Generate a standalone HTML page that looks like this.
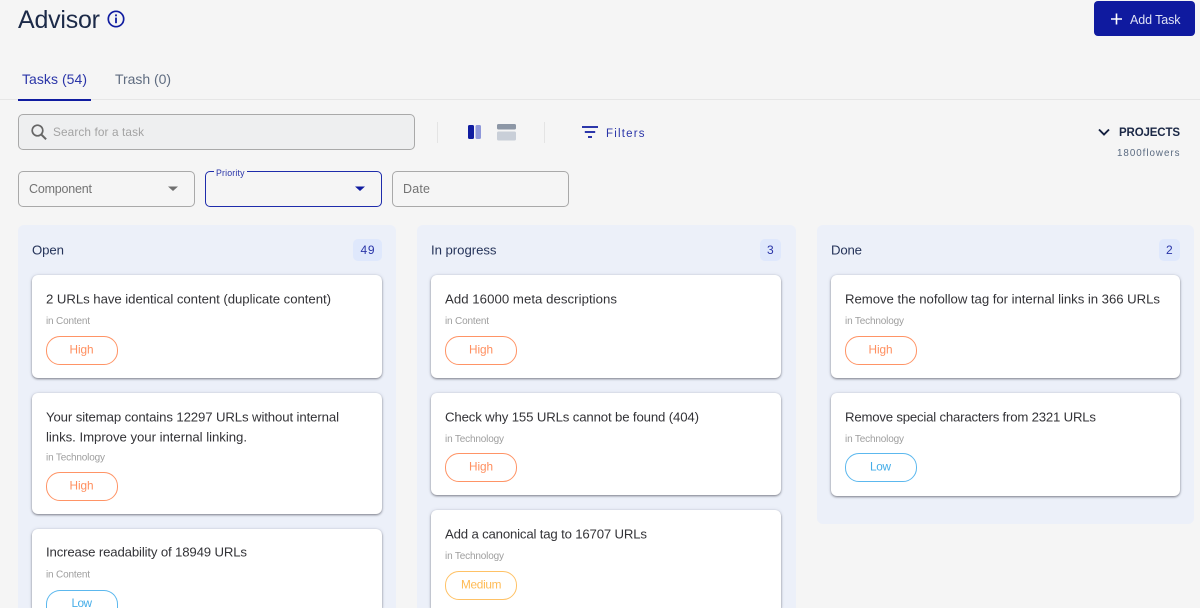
<!DOCTYPE html>
<html><head><meta charset="utf-8">
<style>
html,body{margin:0;padding:0;background:#f5f5f5}
#p{position:relative;width:1200px;height:608px;overflow:hidden;background:#f5f5f5;font-family:"Liberation Sans",sans-serif}
.a{position:absolute;box-sizing:border-box}
.col{background:#ecf0f9;border-radius:6px 6px 0 0}
.card{background:#fff;border-radius:6px;box-shadow:0 1px 2px rgba(40,40,50,.55),0 0 4px rgba(60,70,110,.1)}
.pill{border-radius:14px;border:1.3px solid;width:71.5px;height:28.5px}
.h{border-color:#ff9466}.m{border-color:#ffc266}.l{border-color:#5cb8ee}
.box{border:1.4px solid #a9a9a9;border-radius:5px}
.badge{background:#dfe8fc;border-radius:5px;height:22px}
svg{position:absolute;left:0;top:0}
text{font-family:"Liberation Sans",sans-serif}
.t{font-size:13.2px;fill:#333337}
.s{font-size:10px;fill:#9e9e9e}
.ch{font-size:11.8px;fill:#ff8f5f}.cm{font-size:11.8px;fill:#ffbb55}.cl{font-size:11.8px;fill:#45ade8}
.c{font-size:13.2px;fill:#26345a}
.b{font-size:12px;fill:#2a35a8}
</style></head><body>
<div id="p">
<div class="a" style="left:1094px;top:1px;width:101px;height:35px;background:#0f1a9f;border-radius:4px"></div>
<div class="a" style="left:0;top:99px;width:1200px;height:1.4px;background:#e6e6e6"></div>
<div class="a" style="left:18px;top:98.5px;width:73px;height:2px;background:#101ca0"></div>
<div class="a box" style="left:18px;top:114px;width:397px;height:36px;background:#eeeff0"></div>
<div class="a" style="left:437px;top:122px;width:1px;height:21px;background:#e4e4e4"></div>
<div class="a" style="left:544px;top:122px;width:1px;height:21px;background:#e4e4e4"></div>
<div class="a box" style="left:18px;top:171px;width:176.5px;height:36px"></div>
<div class="a box" style="left:205px;top:171px;width:176.5px;height:36px;border-color:#1e2cab"></div>
<div class="a" style="left:214px;top:168px;width:33px;height:6px;background:#f5f5f5"></div>
<div class="a box" style="left:392px;top:171px;width:176.5px;height:36px"></div>

<div class="a col" style="left:18px;top:225px;width:378px;height:383px"></div>
<div class="a col" style="left:417px;top:225px;width:378.5px;height:383px"></div>
<div class="a col" style="left:817px;top:225px;width:377px;height:299px;border-radius:6px"></div>

<div class="a badge" style="left:353px;top:239px;width:29px"></div>
<div class="a badge" style="left:760px;top:239px;width:21px"></div>
<div class="a badge" style="left:1159px;top:239px;width:21px"></div>

<div class="a card" style="left:32px;top:275px;width:350px;height:103px"></div>
<div class="a card" style="left:32px;top:393px;width:350px;height:121px"></div>
<div class="a card" style="left:32px;top:529px;width:350px;height:79px;border-radius:6px 6px 0 0"></div>
<div class="a card" style="left:431px;top:275px;width:350px;height:103px"></div>
<div class="a card" style="left:431px;top:393px;width:350px;height:102px"></div>
<div class="a card" style="left:431px;top:510px;width:350px;height:98px;border-radius:6px 6px 0 0"></div>
<div class="a card" style="left:831px;top:275px;width:349px;height:103px"></div>
<div class="a card" style="left:831px;top:393px;width:349px;height:103px"></div>

<div class="a pill h" style="left:46px;top:336px"></div>
<div class="a pill h" style="left:46px;top:472px"></div>
<div class="a pill l" style="left:46px;top:590px;height:18px;border-bottom:0;border-radius:14px 14px 0 0"></div>
<div class="a pill h" style="left:445px;top:336px"></div>
<div class="a pill h" style="left:445px;top:453px"></div>
<div class="a pill m" style="left:445px;top:571px"></div>
<div class="a pill h" style="left:845px;top:336px"></div>
<div class="a pill l" style="left:845px;top:453px"></div>

<svg width="1200" height="608" viewBox="0 0 1200 608">
<text x="18" y="28" font-size="25" fill="#1c2a48" textLength="82">Advisor</text>
<circle cx="116" cy="19" r="7.7" fill="none" stroke="#101ca0" stroke-width="1.7"/>
<rect x="115.1" y="17.6" width="1.8" height="5.6" fill="#101ca0"/><rect x="115.1" y="14.4" width="1.8" height="1.9" fill="#101ca0"/>
<path d="M1116.5 13.5v11M1111 19h11" stroke="#fff" stroke-width="1.6" fill="none"/>
<text x="1130" y="24" font-size="12.5" fill="#dfe2f5" textLength="50.5">Add Task</text>

<text x="22" y="84" font-size="14" fill="#2a35a8" textLength="65">Tasks (54)</text>
<text x="115" y="84" font-size="14" fill="#5f6c80" textLength="56">Trash (0)</text>

<circle cx="37.5" cy="130.5" r="5.3" fill="none" stroke="#666" stroke-width="1.7"/>
<path d="M41.3 134.5l4.8 4.8" stroke="#666" stroke-width="2" fill="none"/>
<text x="53" y="136" font-size="11.8" fill="#a3a3a3" textLength="91">Search for a task</text>

<rect x="468" y="125" width="6" height="14" rx="1.5" fill="#101ca0"/>
<rect x="475.5" y="125" width="5.5" height="14" rx="1.5" fill="#8f98da"/>
<rect x="497" y="124" width="19" height="5.5" rx="1.5" fill="#8d97a6"/>
<rect x="497" y="131.5" width="19" height="9" rx="1.5" fill="#c9cfd8"/>

<path d="M582 127h16M584.8 132h10.4M588 137h4" stroke="#101ca0" stroke-width="1.7" fill="none"/>
<text x="606" y="137" font-size="11.5" fill="#2a35a8" textLength="38.5">Filters</text>

<path d="M1099 129.5l5 5 5-5" stroke="#14203f" stroke-width="1.9" fill="none"/>
<text x="1119" y="136" font-size="11.5" font-weight="bold" fill="#1a2745" textLength="61">PROJECTS</text>
<text x="1117" y="156" font-size="9.8" fill="#5a6a80" textLength="62.5">1800flowers</text>

<text x="29" y="193" font-size="12.5" fill="#737373" textLength="63">Component</text>
<path d="M168 186.5h10l-5 4.5z" fill="#707070"/>
<text x="216" y="176" font-size="8.8" fill="#2a35a8" textLength="28.5">Priority</text>
<path d="M355 186.5h10l-5 4.5z" fill="#101ca0"/>
<text x="403" y="193" font-size="12.5" fill="#737373" textLength="27">Date</text>

<text class="c" x="32" y="254.5" textLength="32">Open</text>
<text class="c" x="431" y="254.5" textLength="65.5">In progress</text>
<text class="c" x="831" y="254.5" textLength="31">Done</text>
<text class="b" x="360.5" y="254" textLength="14">49</text>
<text class="b" x="767" y="254">3</text>
<text class="b" x="1166" y="254">2</text>

<text class="t" x="46" y="303.5" textLength="285">2 URLs have identical content (duplicate content)</text>
<text class="s" x="46" y="324" textLength="44">in Content</text>
<text class="ch" x="69.5" y="353.5" textLength="24">High</text>

<text class="t" x="46" y="421.5" textLength="293">Your sitemap contains 12297 URLs without internal</text>
<text class="t" x="46" y="441.5" textLength="201">links. Improve your internal linking.</text>
<text class="s" x="46" y="460.5" textLength="59">in Technology</text>
<text class="ch" x="69.5" y="489.5" textLength="24">High</text>

<text class="t" x="46" y="556.5" textLength="201">Increase readability of 18949 URLs</text>
<text class="s" x="46" y="577.5" textLength="44">in Content</text>
<text class="cl" x="71.5" y="607" textLength="20.5">Low</text>

<text class="t" x="445" y="303.5" textLength="172">Add 16000 meta descriptions</text>
<text class="s" x="445" y="324" textLength="44">in Content</text>
<text class="ch" x="469" y="353.5" textLength="24">High</text>

<text class="t" x="445" y="421.5" textLength="254">Check why 155 URLs cannot be found (404)</text>
<text class="s" x="445" y="442" textLength="59">in Technology</text>
<text class="ch" x="469" y="470.5" textLength="24">High</text>

<text class="t" x="445" y="538.5" textLength="202">Add a canonical tag to 16707 URLs</text>
<text class="s" x="445" y="559" textLength="59">in Technology</text>
<text class="cm" x="461" y="588.5" textLength="40.5">Medium</text>

<text class="t" x="845" y="303.5" textLength="315">Remove the nofollow tag for internal links in 366 URLs</text>
<text class="s" x="845" y="324" textLength="59">in Technology</text>
<text class="ch" x="868.5" y="353.5" textLength="24">High</text>

<text class="t" x="845" y="421.5" textLength="251">Remove special characters from 2321 URLs</text>
<text class="s" x="845" y="442" textLength="59">in Technology</text>
<text class="cl" x="870" y="470.5" textLength="21">Low</text>
</svg>
</div>
</body></html>
